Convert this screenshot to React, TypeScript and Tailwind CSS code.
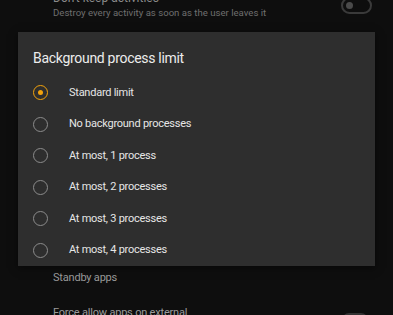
const OPTIONS = [
  "Standard limit",
  "No background processes",
  "At most, 1 process",
  "At most, 2 processes",
  "At most, 3 processes",
  "At most, 4 processes",
];

function Toggle() {
  return (
    <div className="w-[31px] h-[17px] rounded-full border-2 border-[#3a3a3a] flex items-center px-[3px]">
      <div className="w-[7px] h-[7px] rounded-full bg-[#4a4a4a]" />
    </div>
  );
}

function Radio({ checked }: { checked: boolean }) {
  return (
    <div
      className={`w-[15px] h-[15px] rounded-full border-[1.5px] flex items-center justify-center ${
        checked ? "border-[#f2a20c]" : "border-[#8c8c8c]"
      }`}
    >
      {checked && <div className="w-[5px] h-[5px] rounded-full bg-[#f2a20c]" />}
    </div>
  );
}

export default function App() {
  const selected = 0;
  return (
    <div
      className="relative w-[393px] h-[315px] overflow-hidden bg-[#0e0e0e]"
      style={{ fontFamily: "Roboto, 'Noto Sans', sans-serif" }}
    >
      {/* settings list behind the dialog */}
      <div className="flex flex-col -mt-[12px]">
        <div className="flex items-center pl-[53px] pr-[21px] h-[34px]">
          <div className="flex-1 flex flex-col">
            <span className="text-[12px] leading-[16px] text-[#8a8a8a]">Don't keep activities</span>
            <span className="text-[9.6px] leading-[14px] text-[#6f6f6f]">
              Destroy every activity as soon as the user leaves it
            </span>
          </div>
          <Toggle />
        </div>
        <div className="h-[245px]" />
        <div className="flex items-center pl-[53px] h-[22px]">
          <span className="text-[11px] tracking-[-0.2px] text-[#9a9a9a]">Standby apps</span>
        </div>
        <div className="h-[14px]" />
        <div className="flex items-start pl-[53px] pr-[25px] h-[40px]">
          <span className="flex-1 text-[11px] tracking-[-0.2px] leading-[16px] pt-[2px] text-[#9a9a9a]">
            Force allow apps on external
          </span>
          <div className="mt-[10px] w-[26px] h-[14px] rounded-full border-2 border-[#333]" />
        </div>
      </div>

      {/* dialog */}
      <div className="absolute left-[18px] top-[32px] w-[357px] h-[234px] bg-[#2e2e2e] flex flex-col shadow-[0_2px_8px_rgba(0,0,0,0.5)]">
        <div className="pl-[15px] pt-[16px] h-[48px] text-[14px] tracking-[-0.3px] leading-[20px] text-[#ececec]">
          Background process limit
        </div>
        <div className="flex flex-col">
          {OPTIONS.map((o, i) => (
            <div key={o} className="flex items-center h-[31.5px] pl-[15px]">
              <Radio checked={i === selected} />
              <span className="ml-[21px] text-[11px] tracking-[-0.25px] text-[#e6e6e6]">{o}</span>
            </div>
          ))}
        </div>
      </div>
    </div>
  );
}
